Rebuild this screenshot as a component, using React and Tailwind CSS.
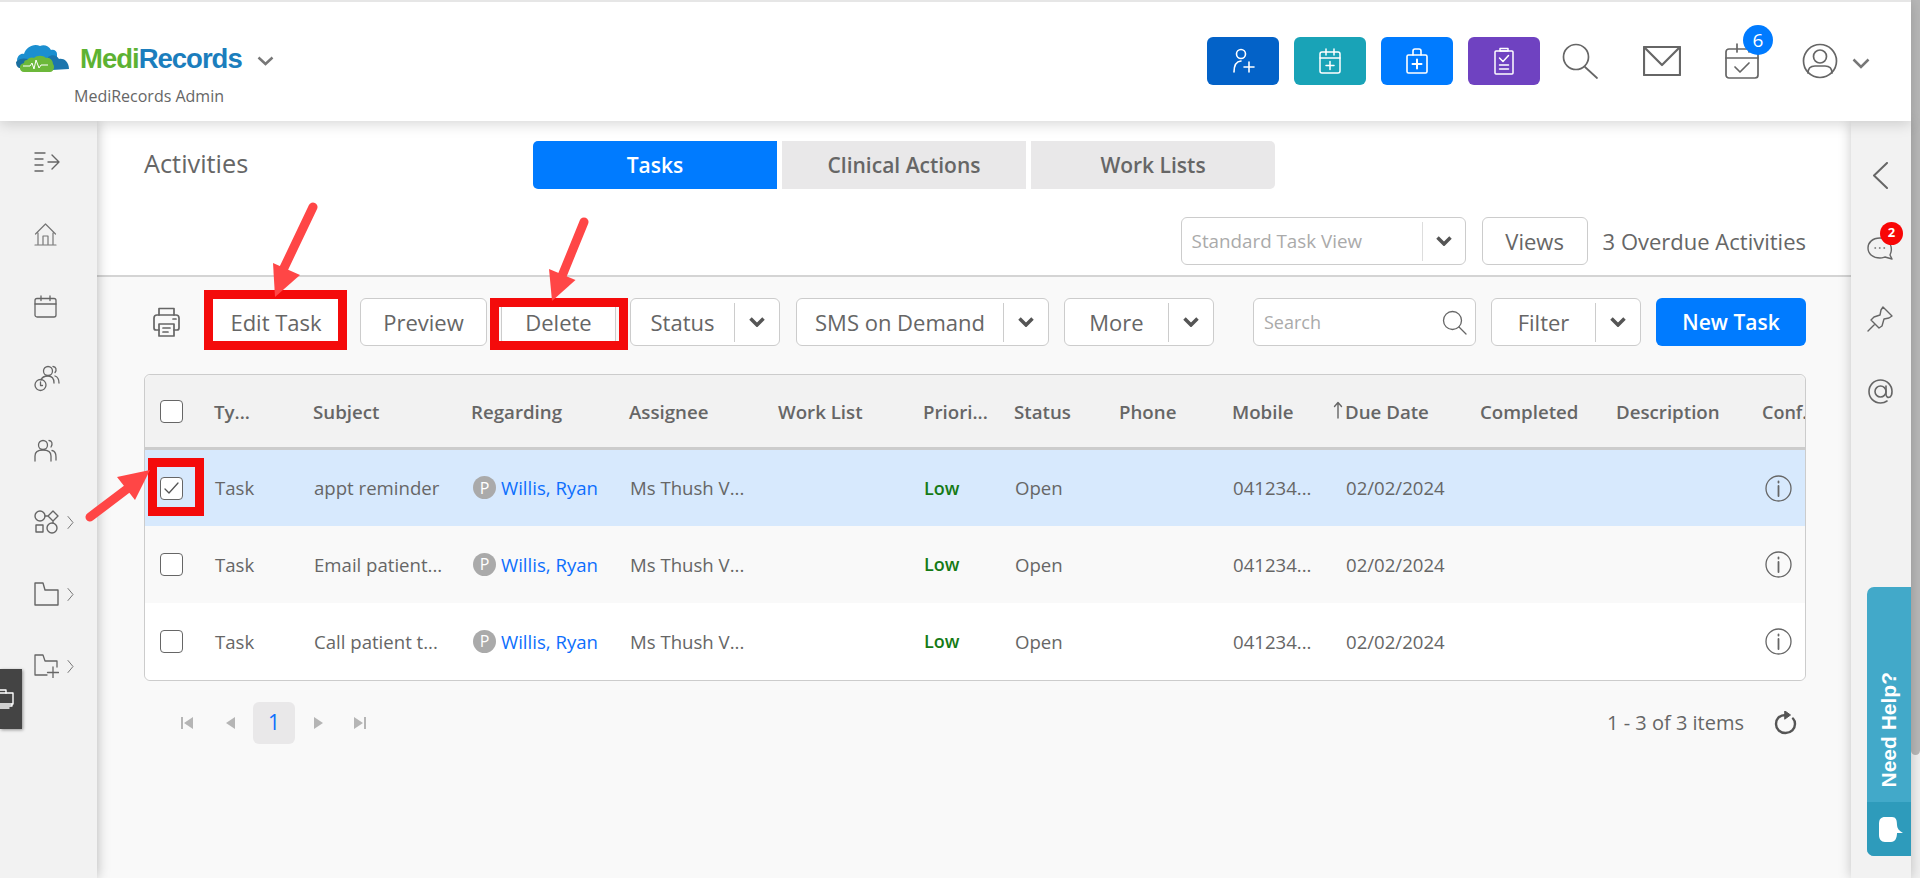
import React from "react";

const S = ({ w, h, vb, children, c = "#666", sw = 1.5, className = "" }) => (
  <svg width={w} height={h} viewBox={vb || `0 0 ${w} ${h}`} fill="none" stroke={c} strokeWidth={sw} strokeLinecap="round" strokeLinejoin="round" className={`shrink-0 ${className}`}>
    {children}
  </svg>
);

const Chevron = ({ w = 16, h = 10, c = "#555", sw = 3.5 }) => (
  <S w={w} h={h} c={c} sw={sw}>
    <path d={`M1.500 1.500 L${w / 2} ${h - 2} L${w - 1.5} 1.500`} strokeLinecap="butt" strokeLinejoin="miter" />
  </S>
);

const Small = () => (
  <S w={7} h={13} c="#777" sw={1}>
    <path d="M1 .5 L6 6.500 L1 12.500" />
  </S>
);

const Logo = () => (
  <svg width="53" height="28" viewBox="0 0 53 28" className="shrink-0">
    <path d="M2 20 C-1 14 4 9 8 10 C10 3 18 -1 24 2 C28 0 33 2 35 6 C38 5 41 7 41 10 L41 21 L4 23 Z" fill="#1b8fd0" />
    <path d="M0 18 C3 14 8 14 12 15 L10 24 L3 24 C1 23 0 21 0 18 Z" fill="#1a6f9f" />
    <path d="M32 13 C36 10 41 11 43 15 C47 14 53 17 53 25 L36 26 C32 23 31 17 32 13 Z" fill="#1c75ac" />
    <path d="M11 16 C13 13 17 13 18 14 C21 11 27 11 30 14 C34 13 37 17 37 20 C39 22 38 28 34 28 L8 28 C3 28 2 20 8 19 C8 17 9 16 11 16 Z" fill="#6cb83a" />
    <path d="M7 22 L14 22 L16 19 L18 25 L20 16 L23 24 L25 21 L32 21" fill="none" stroke="#fff" strokeWidth="1" />
  </svg>
);

const ActionBtn = ({ bg, children }) => (
  <button className={`flex h-12 w-[72px] items-center justify-center rounded-[6px] ${bg}`}>{children}</button>
);

const Header = () => (
  <header className="relative z-20 flex h-[121px] shrink-0 items-start border-t-2 border-[#e6e6e6] bg-white shadow-[0_2px_14px_rgba(0,0,0,0.18)]">
    <div className="flex flex-col pl-4 pt-[42px]">
      <div className="flex items-end">
        <Logo />
        <span className="-mb-[2px] ml-[11px] text-[27.5px] leading-[30px] font-bold tracking-[-1px] font-['Liberation_Sans',sans-serif]">
          <span className="text-[#5db233]">Medi</span>
          <span className="text-[#1b7ebd]">Records</span>
        </span>
        <span className="mb-[6px] ml-[15px]"><Chevron w={17} h={10} c="#777" sw={2.5} /></span>
      </div>
      <div className="pl-[58px] pt-[13px] text-[16px] leading-[22px] text-[#666]">MediRecords Admin</div>
    </div>
    <div className="ml-auto flex items-center pt-[35px]">
      <div className="flex gap-[15px]">
        <ActionBtn bg="bg-[#0362c8]">
          <S w={24} h={26} c="#fff" sw={1.6}>
            <circle cx="10" cy="6" r="4.500" />
            <path d="M3 24 C3 17 5 13.500 10 13" />
            <path d="M13 19 H23 M18 14 V24" />
          </S>
        </ActionBtn>
        <ActionBtn bg="bg-[#19a3b7]">
          <S w={24} h={26} c="#fff" sw={1.5}>
            <rect x="2" y="4" width="20" height="21" rx="2" />
            <path d="M2 10 H22 M8 1 V7 M16 1 V7" />
            <path d="M8 17.500 H16 M12 13.500 V21.500" />
          </S>
        </ActionBtn>
        <ActionBtn bg="bg-[#007bff]">
          <S w={24} h={26} c="#fff" sw={1.6}>
            <rect x="2" y="7" width="20" height="18" rx="1.500" />
            <path d="M8 7 V3 C8 1.800 9 1 10 1 H14 C15 1 16 1.800 16 3 V7" />
            <path d="M7.500 16 H16.500 M12 11.500 V20.500" strokeWidth="2" />
          </S>
        </ActionBtn>
        <ActionBtn bg="bg-[#6f42c1]">
          <S w={22} h={28} c="#fff" sw={1.5}>
            <rect x="2" y="4" width="18" height="23" rx="1" />
            <path d="M7 1.500 H15 V4 H7 Z" />
            <path d="M6.500 11 L10 14.500 L15.500 8.500 M6.500 18 H15.500 M6.500 22 H15.500" />
          </S>
        </ActionBtn>
      </div>
      <span className="ml-[22px]">
        <S w={36} h={36} c="#666" sw={1.7}>
          <circle cx="14" cy="14" r="12.500" />
          <path d="M23 24 L35 35" />
        </S>
      </span>
      <span className="ml-[45px]">
        <S w={38} h={30} c="#666" sw={2.2}>
          <rect x="1" y="1" width="36" height="28" />
          <path d="M1.500 1.500 L19 19 L36.500 1.500" />
        </S>
      </span>
      <span className="relative ml-[44px]">
        <S w={34} h={36} c="#666" sw={1.7}>
          <rect x="1" y="6" width="32" height="29" rx="3" />
          <path d="M1 15 H33 M12 1 V9 M24 1 V9 M10 24 L15 29 L24 20" />
        </S>
        <span className="absolute -top-[18px] left-[18px] flex h-[30px] w-[30px] items-center justify-center rounded-full bg-[#007bff] text-[19px] text-white">6</span>
      </span>
      <span className="ml-[43px]">
        <S w={36} h={36} c="#666" sw={1.7}>
          <circle cx="18" cy="18" r="16.500" />
          <circle cx="18" cy="13.500" r="6.500" />
          <path d="M6 30 C6 24 10 23 13 23 H23 C26 23 30 24 30 30" />
        </S>
      </span>
      <span className="ml-[14px] mr-[41px] mt-1"><Chevron w={18} h={11} c="#777" sw={2.5} /></span>
    </div>
  </header>
);

const navIcons = [
  <S w={26} h={22} c="#666" sw={1.4}><path d="M1 2 H11 M1 8 H9 M1 14 H9 M1 20 H9 M14 11 H25 M18 4 L25 11 L18 18" /></S>,
  <S w={23} h={23} c="#777" sw={1.2}><path d="M11.500 1 L1.500 11 M11.500 1 L21.500 11 M4 10 V21 M19 10 V21 M1 22 H22 M9 21 V13 H14 V21" /></S>,
  <S w={23} h={23} c="#666" sw={1.3}><rect x="1" y="3.500" width="21" height="18.500" rx="2" /><path d="M1 9 H22 M7 1 V5.500 M16 1 V5.500" /></S>,
  <S w={26} h={27} c="#666" sw={1.3}><circle cx="14" cy="6" r="4.500" /><path d="M7 15 C8 12 10 11 14 11 C18 11 20 13 20 18 M19 1.500 C22 1.500 23 5 21 7.500 M21 11 C24 12 25 14 25 18" /><circle cx="6.500" cy="20" r="5.500" /><path d="M6.500 17 V20.500 H8.500" /></S>,
  <S w={23} h={23} c="#666" sw={1.3}><circle cx="9" cy="6" r="4.500" /><path d="M1 22 V17 C1 13 4 11 9 11 C14 11 17 13 17 17 V22 M15 1.500 C18 1.500 19 5 17 8 M18 11.500 C21 12 22 14 22 18 V21" /></S>,
  <S w={25} h={24} c="#666" sw={1.4}><circle cx="6" cy="6" r="5" /><rect x="2" y="15" width="7" height="7" /><circle cx="18" cy="18" r="5" /><path d="M19 1 L24 6 L19 11 L14 6 Z M11 6 H14 M19 11 V13" /></S>,
  <S w={25} h={24} c="#666" sw={1.4}><path d="M1 1 V23 H24 V8 H11 L9 1 Z" /></S>,
  <S w={25} h={24} c="#666" sw={1.3}><path d="M1 1 V21 H13 M1 1 H9 L11 7 H23 V13" /><path d="M19 13 V24 M13.500 18.500 H24.500" /></S>,
];

const LeftSidebar = () => (
  <aside className="relative z-10 flex w-[97px] shrink-0 flex-col bg-[#f2f2f2] pt-[5px] shadow-[0_0_12px_rgba(0,0,0,0.28)]">
    {navIcons.map((ic, i) => (
      <div key={i} className="flex h-[72px] items-center pl-[34px]">
        <span className="flex w-[33px] items-center">{ic}</span>
        {i >= 5 && <Small />}
      </div>
    ))}
    <div className="absolute left-0 top-[548px] flex h-[60px] w-[22px] items-center justify-end overflow-hidden bg-[#444] pr-[8px] shadow-[1px_1px_3px_rgba(0,0,0,0.4)]">
      <S w={22} h={20} c="#fff" sw={1.4}>
        <rect x="1" y="4" width="20" height="11" />
        <path d="M5 4 V1 H14 V4 M6 19 H17 M2 15 V17 H20 V15" />
      </S>
    </div>
  </aside>
);

const RightSidebar = () => (
  <aside className="relative z-10 flex w-[60px] shrink-0 flex-col bg-[#f2f2f2] pt-[18px] shadow-[0_0_12px_rgba(0,0,0,0.22)]">
    <div className="flex h-[72px] items-center justify-center pr-[2px]">
      <S w={16} h={27} c="#666" sw={2}><path d="M15 1 L2 13.500 L15 26" /></S>
    </div>
    <div className="flex h-[72px] items-center justify-center pr-[2px]">
      <span className="relative">
        <S w={26} h={25} c="#666" sw={1.4}>
          <path d="M23 20 C26 14 24 3 13 3 C5 3 1 8 1 13 C1 19 6 23 13 23 C16 23 17 22 18 22 L25 24 Z" />
          <path d="M8 13 H8.500 M12.500 13 H13 M17 13 H17.500" />
        </S>
        <span className="absolute -right-[10px] -top-[13px] flex h-[23px] w-[23px] items-center justify-center rounded-full bg-[#f80606] text-[13px] font-bold text-white">2</span>
      </span>
    </div>
    <div className="flex h-[72px] items-center justify-center pr-[2px]">
      <S w={26} h={26} c="#666" sw={1.4}><path d="M16 1 L25 10 L22 12 L17 13 L15 20 L12 22 L4 14 L7 11 L13 9 L14 4 Z M8 18 L1 25" /></S>
    </div>
    <div className="flex h-[72px] items-center justify-center pr-[2px]">
      <S w={25} h={25} c="#666" sw={1.6}><circle cx="12.500" cy="12.500" r="5.500" /><path d="M18 7 V15 C18 18 20 19 22 18 C24 16.500 24 14 24 12.500 C24 6 19 1 12.500 1 C6 1 1 6 1 12.500 C1 19 6 24 12.500 24 C15 24 17 23.500 19 22" /></S>
    </div>
    <div className="ml-auto mb-[22px] mt-auto flex h-[269px] w-[44px] flex-col overflow-hidden rounded-l-[7px] bg-[#42a9c9]">
      <div className="flex flex-1 items-center justify-center pt-[70px]">
        <span className="rotate-180 text-[21px] font-bold text-white [writing-mode:vertical-rl] font-['Liberation_Sans',sans-serif]">Need Help?</span>
      </div>
      <div className="flex h-[54px] items-center bg-[#2e9bbb] pl-[12px]">
        <svg width="24" height="25" viewBox="0 0 24 25" fill="#fff"><path d="M6 0 H13 C17 0 18 3 18 8 C18 11 20 14 24 16 L18 16 C18 21 16 25 12 25 H6 C2 25 0 22 0 18 V7 C0 2 2 0 6 0 Z" /></svg>
      </div>
    </div>
  </aside>
);

const Box = ({ children, className = "" }) => (
  <div className={`flex h-12 items-center justify-center rounded-[6px] border border-[#ccc] bg-white text-[22px] font-medium text-[#666] ${className}`}>{children}</div>
);

const Split = ({ label, className }) => (
  <Box className={`relative ${className}`}>
    <span className="flex-1 text-center">{label}</span>
    <span className="h-[39px] w-px bg-[#ccc]" />
    <span className="flex w-[44px] items-center justify-center"><Chevron /></span>
  </Box>
);

const RedBox = ({ className }) => <span className={`pointer-events-none absolute border-[9px] border-[#f40b0b] ${className}`} />;

const cols = "grid grid-cols-[69px_99px_158px_158px_149px_145px_91px_105px_113px_99px_149px_136px_146px_1fr] items-center";

const Check = ({ on }) => (
  <span className="flex h-[23px] w-[23px] items-center justify-center rounded-[4px] border border-[#666] bg-white">
    {on && <S w={15} h={12} c="#555" sw={1.3}><path d="M1 7 L5 11 L14 1" /></S>}
  </span>
);

const Row = ({ subject, bg, on, h }) => (
  <div className={`${cols} text-[18.6px] text-[#666] ${bg} ${h}`}>
    <div className="relative ml-[15px] w-[23px]">
      <Check on={on} />
      {on && <RedBox className="-bottom-[16px] -left-[12px] -right-[21px] -top-[19px]" />}
    </div>
    <div className="pl-px">Task</div>
    <div className="pl-px">{subject}</div>
    <div className="flex items-center pl-[2px]">
      <span className="flex h-[23px] w-[23px] items-center justify-center rounded-full bg-[#aaa] text-[16px] text-white">P</span>
      <span className="ml-[5px] text-[#0d6efd]">Willis, Ryan</span>
    </div>
    <div className="pl-px">Ms Thush V...</div>
    <div />
    <div className="pl-px font-semibold text-[18px] text-[#157a15]">Low</div>
    <div className="pl-px">Open</div>
    <div />
    <div className="pl-px">041234...</div>
    <div className="pl-[15px]">02/02/2024</div>
    <div />
    <div />
    <div className="pl-[3px]">
      <S w={27} h={27} c="#666" sw={1.3}><circle cx="13.500" cy="13.500" r="12.500" /><path d="M13.500 11 V21 M13.500 6.500 V7.500" strokeWidth="1.8" /></S>
    </div>
  </div>
);

const Head = ({ children, className = "" }) => <div className={`whitespace-nowrap ${className}`}>{children}</div>;

const Table = () => (
  <div className="mt-[28px] rounded-[6px] border border-[#ccc] bg-white">
    <div className={`${cols} h-[75px] rounded-t-[6px] border-b-[3px] border-[#ccc] bg-[#f2f2f2] pt-[3px] text-[18.7px] font-semibold text-[#666]`}>
      <div className="-mt-[2px] ml-[15px] w-[23px]"><Check /></div>
      <Head>Ty...</Head>
      <Head>Subject</Head>
      <Head>Regarding</Head>
      <Head>Assignee</Head>
      <Head>Work List</Head>
      <Head>Priori...</Head>
      <Head>Status</Head>
      <Head>Phone</Head>
      <Head>Mobile</Head>
      <Head className="flex items-center">
        <S w={14} h={18} c="#666" sw={1.4} className="-mt-1"><path d="M7 17 V2 M3.500 5.500 L7 1.500 L10.500 5.500" /></S>
        <span>Due Date</span>
      </Head>
      <Head>Completed</Head>
      <Head>Description</Head>
      <Head className="overflow-hidden text-[18px]">Conf...</Head>
    </div>
    <Row subject="appt reminder" bg="bg-[#d7e9fd]" on h="h-[76px]" />
    <Row subject="Email patient..." bg="bg-[#f9f9f9]" h="h-[77px]" />
    <Row subject="Call patient t..." bg="bg-white rounded-b-[6px]" h="h-[77px]" />
  </div>
);

const PageIcon = ({ d, className = "" }) => (
  <svg width="12" height="12" viewBox="0 0 12 12" fill="#b5b5b5" className={`shrink-0 ${className}`}><path d={d} /></svg>
);

const Pager = () => (
  <div className="mt-[21px] flex items-center">
    <PageIcon className="ml-[37px]" d="M0 0 H2 V12 H0 Z M12 0 V12 L3 6 Z" />
    <PageIcon className="ml-[32px]" d="M10 0 V12 L1 6 Z" />
    <span className="ml-[16px] flex h-[42px] w-[42px] items-center justify-center rounded-[6px] bg-[#e9e8e9] text-[21px] text-[#0d6efd]">1</span>
    <PageIcon className="ml-[18px]" d="M1 0 V12 L10 6 Z" />
    <PageIcon className="ml-[29px]" d="M0 0 V12 L9 6 Z M10 0 H12 V12 H10 Z" />
    <span className="ml-auto text-[20px] text-[#666]">1 - 3 of 3 items</span>
    <span className="ml-[30px] mr-[9px]">
      <S w={23} h={24} c="#555" sw={2.4}>
        <path d="M12 4 C5 4 2 8 2 13 C2 18 6 22 11.500 22 C17 22 21 18 21 13 C21 10.500 20 8.500 19 7.500" />
        <path d="M11 0 L16.500 4 L11 8 Z" fill="#555" strokeWidth="1" />
      </S>
    </span>
  </div>
);

const Main = () => (
  <main className="flex min-w-0 flex-1 flex-col bg-white">
    <div className="flex items-start pl-[47px] pt-[20px]">
      <h1 className="w-[389px] pt-[7px] text-[25.3px] leading-[30px] font-medium text-[#666]">Activities</h1>
      <div className="flex gap-[5px] text-[21px] font-semibold">
        <div className="flex h-12 w-[244px] items-center justify-center rounded-l-[5px] bg-[#007bff] pt-px text-white">Tasks</div>
        <div className="flex h-12 w-[244px] items-center justify-center bg-[#e9e8e9] pt-px text-[#666]">Clinical Actions</div>
        <div className="flex h-12 w-[244px] items-center justify-center rounded-r-[5px] bg-[#e9e8e9] pt-px text-[#666]">Work Lists</div>
      </div>
    </div>
    <div className="mt-[28px] flex items-center justify-end border-b-2 border-[#d4d4d4] pb-[10px] pr-[45px]">
      <div className="flex h-12 w-[285px] items-center rounded-[6px] border border-[#ccc] bg-white text-[18.8px] text-[#aaa]">
        <span className="flex-1 pl-[10px]">Standard Task View</span>
        <span className="h-[39px] w-px bg-[#ddd]" />
        <span className="flex w-[42px] items-center justify-center"><Chevron /></span>
      </div>
      <Box className="ml-4 w-[106px]">Views</Box>
      <span className="ml-[15px] text-[22px] font-medium text-[#666]">3 Overdue Activities</span>
    </div>
    <div className="flex flex-1 flex-col bg-[#f9f9f9] pl-[47px] pr-[45px] pt-[21px]">
      <div className="flex items-center">
        <span className="ml-[9px] mr-[26px]">
          <S w={27} h={30} c="#666" sw={1.7}>
            <path d="M6 8 V1.500 H21 V8" />
            <path d="M6 23 H3 C1.500 23 1 22 1 21 V11 C1 9 2 8 4 8 H23 C25 8 26 9 26 11 V21 C26 22 25.500 23 24 23 H21" />
            <path d="M6 17 H21 V29 H6 Z M10 21 H17 M10 25 H15 M20 12 H23" />
          </S>
        </span>
        <div className="relative">
          <Box className="w-[140px]">Edit Task</Box>
          <RedBox className="-bottom-[4px] -left-[2px] -right-px -top-[8px]" />
        </div>
        <Box className="ml-[14px] w-[127px]">Preview</Box>
        <div className="relative ml-[14px]">
          <Box className="w-[115px]">Delete</Box>
          <RedBox className="-bottom-[4px] -left-[11px] -right-[12px] top-0" />
        </div>
        <Split label="Status" className="ml-[14px] w-[150px]" />
        <Split label="SMS on Demand" className="ml-[16px] w-[253px]" />
        <Split label="More" className="ml-[15px] w-[150px]" />
        <div className="ml-auto flex h-12 w-[223px] items-center rounded-[6px] border border-[#ccc] bg-white pl-[10px] pr-[8px]">
          <input placeholder="Search" className="min-w-0 flex-1 bg-transparent text-[18px] text-[#666] outline-none placeholder:text-[#aaa]" />
          <S w={25} h={25} c="#666" sw={1.3}><circle cx="10.500" cy="10.500" r="9" /><path d="M17 17 L24 24" /></S>
        </div>
        <Split label="Filter" className="ml-[15px] w-[150px]" />
        <button className="ml-[15px] h-12 w-[150px] rounded-[6px] bg-[#007bff] pt-px text-[21px] font-semibold text-white">New Task</button>
      </div>
      <Table />
      <Pager />
    </div>
  </main>
);

export default function App() {
  return (
    <div className="relative flex h-[878px] w-full overflow-hidden bg-white font-['Open_Sans',sans-serif]">
      <div className="flex min-w-0 flex-1 flex-col">
        <Header />
        <div className="flex min-h-0 flex-1">
          <LeftSidebar />
          <Main />
          <RightSidebar />
        </div>
      </div>
      <div className="w-[9px] shrink-0 bg-[#f1f1f1]">
        <div className="h-[755px] rounded-b-[5px] bg-[#b8b8b8]" />
      </div>
      <svg className="pointer-events-none absolute inset-0 z-30" width="1920" height="878" fill="#ff4646" stroke="none">
        <path d="M313 207 L283 270" stroke="#ff4646" strokeWidth="9" strokeLinecap="round" />
        <path d="M275 297 L273 263 L300 275 Z" />
        <path d="M584 222 L562 276" stroke="#ff4646" strokeWidth="9" strokeLinecap="round" />
        <path d="M552 301 L549 269 L575.500 280 Z" />
        <path d="M90 517 L127 489" stroke="#ff4646" strokeWidth="9" strokeLinecap="round" />
        <path d="M150 470 L117 477 L135 500 Z" />
      </svg>
    </div>
  );
}
